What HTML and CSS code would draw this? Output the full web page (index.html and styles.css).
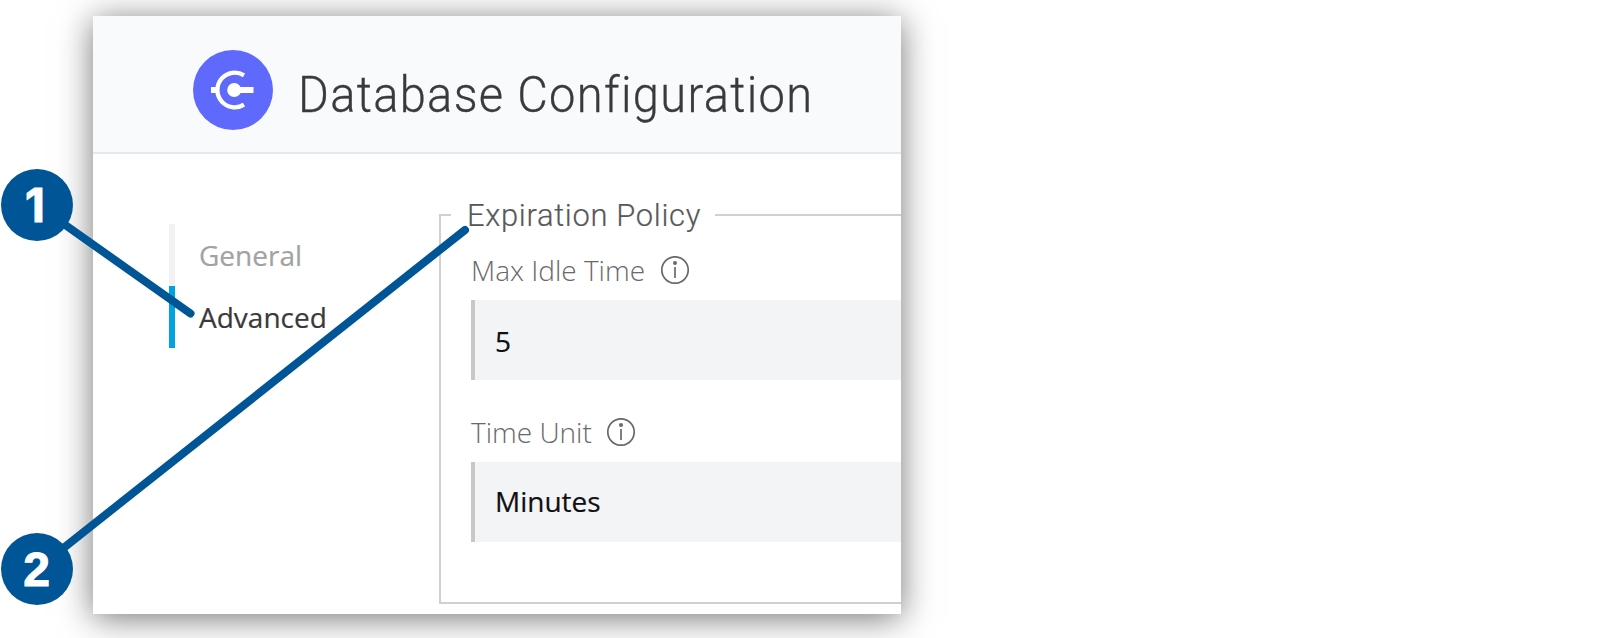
FILE: index.html
```html
<!DOCTYPE html>
<html lang="en">
<head>
<meta charset="utf-8">
<title>Database Configuration</title>
<link rel="stylesheet" href="styles.css">
</head>
<body>
<main class="card">
  <header class="header">
    <svg class="logo" viewBox="0 0 80 80" aria-hidden="true">
      <circle cx="40" cy="40" r="40" fill="#5f69fb"/>
      <path d="M51 25.4A17.3 17.3 0 1 0 51 54.6" fill="none" stroke="#fff" stroke-width="4.3"/>
      <path d="M18 40h6M41 40h19.5" stroke="#fff" stroke-width="5.8"/>
      <circle cx="41.2" cy="40" r="7" fill="#fff"/>
    </svg>
    <h1 class="title">Database Configuration</h1>
  </header>
  <div class="body">
    <nav class="nav">
      <a class="nav-item">General</a>
      <a class="nav-item active">Advanced</a>
    </nav>
    <fieldset class="policy">
      <legend class="legend"><span class="legend-text">Expiration Policy</span></legend>
      <div class="field">
        <div class="label"><span class="idle">Max Idle Time</span>
          <svg class="info" viewBox="0 0 28 28"><circle cx="14" cy="14" r="13.2"/><path d="M14 11v11"/><circle class="dot" cx="14" cy="7" r="2"/></svg>
        </div>
        <div class="input number">5</div>
      </div>
      <div class="field">
        <div class="label"><span class="unit">Time Unit</span>
          <svg class="info" viewBox="0 0 28 28"><circle cx="14" cy="14" r="13.2"/><path d="M14 11v11"/><circle class="dot" cx="14" cy="7" r="2"/></svg>
        </div>
        <div class="input">Minutes</div>
      </div>
    </fieldset>
  </div>
</main>
<svg class="callouts" viewBox="0 0 1600 638">
  <path class="lead" d="M37 205L190.5 313.5M37 569L465 230"/>
  <circle cx="37" cy="205" r="36"/>
  <circle cx="37" cy="569" r="36"/>
  <text class="one" x="35" y="222">1</text>
  <text x="36.5" y="586">2</text>
</svg>
</body>
</html>
```
FILE: styles.css
```css
* { box-sizing: border-box; }
body {
  margin: 0;
  padding: 16px 0 0 93px;
  height: 638px;
  overflow: hidden;
  background: #fff;
  font-family: "Open Sans", sans-serif;
  font-size: 28px;
}
.card {
  width: 808px;
  height: 598px;
  overflow: hidden;
  background: #fff;
  box-shadow: 0 4px 32px rgba(0, 0, 0, .54);
}
.header {
  display: flex;
  height: 138px;
  padding: 34px 0 0 100px;
  background: #f9fafc;
  border-bottom: 2px solid #e6e8eb;
}
.logo { width: 80px; height: 80px; flex: none; }
.title {
  margin: 15px 0 0 24.5px;
  font: 300 50px/60px Roboto, sans-serif;
  letter-spacing: 1.4px;
  white-space: nowrap;
  color: #3a3a3c;
  transform: scaleX(.941);
  transform-origin: left;
  -webkit-text-stroke: .3px #3a3a3c;
}
.body { display: flex; }
.nav { flex: none; width: 270px; margin: 70px 0 0 76px; }
.nav-item {
  display: block;
  height: 62px;
  line-height: 62px;
  padding-left: 24px;
  border-left: 6px solid #f0f2f2;
  color: #a2a2a2;
  -webkit-text-stroke: .2px;
}
.nav-item.active { border-color: #00a3e0; color: #3a3a3c; }
.policy {
  flex: none;
  width: 520px;
  height: 411px;
  margin: 39px 0 0;
  padding: 0 0 0 30px;
  border: 2px solid #d0d0d0;
}
.legend {
  width: 264px;
  height: 44px;
  margin-left: -20px;
  padding: 0 0 0 16px;
  font: 300 32px/44px Roboto, sans-serif;
  letter-spacing: .7px;
  white-space: nowrap;
  color: #58585a;
}
.legend-text {
  display: inline-block;
  transform: scaleX(.966);
  transform-origin: left;
  -webkit-text-stroke: .2px;
}
.field { display: flex; flex-direction: column; height: 162px; }
.label {
  display: flex;
  align-items: center;
  height: 38px;
  margin: 14px 0 11px;
  font-weight: 300;
  color: #69696b;
}
.idle { width: 190px; white-space: nowrap; }
.unit { width: 136px; white-space: nowrap; }
.info { width: 28px; height: 28px; fill: none; stroke: #69696b; stroke-width: 1.7; }
.dot { fill: #69696b; stroke: none; }
.input {
  height: 80px;
  line-height: 78px;
  padding-left: 20px;
  border-left: 4px solid #c8c8c8;
  background: #f3f4f6;
  color: #101012;
  -webkit-text-stroke: .2px;
}
.number { line-height: 82px; }
.callouts {
  position: absolute;
  left: 0;
  top: 0;
  width: 1600px;
  height: 638px;
  fill: #005596;
}
.lead { fill: none; stroke: #005596; stroke-width: 8; stroke-linecap: round; }
.callouts text {
  fill: #fff;
  stroke: #fff;
  stroke-width: 1;
  font: bold 48px "Liberation Sans", sans-serif;
  text-anchor: middle;
}
.callouts .one { font: bold 46px Inter, sans-serif; }
```
